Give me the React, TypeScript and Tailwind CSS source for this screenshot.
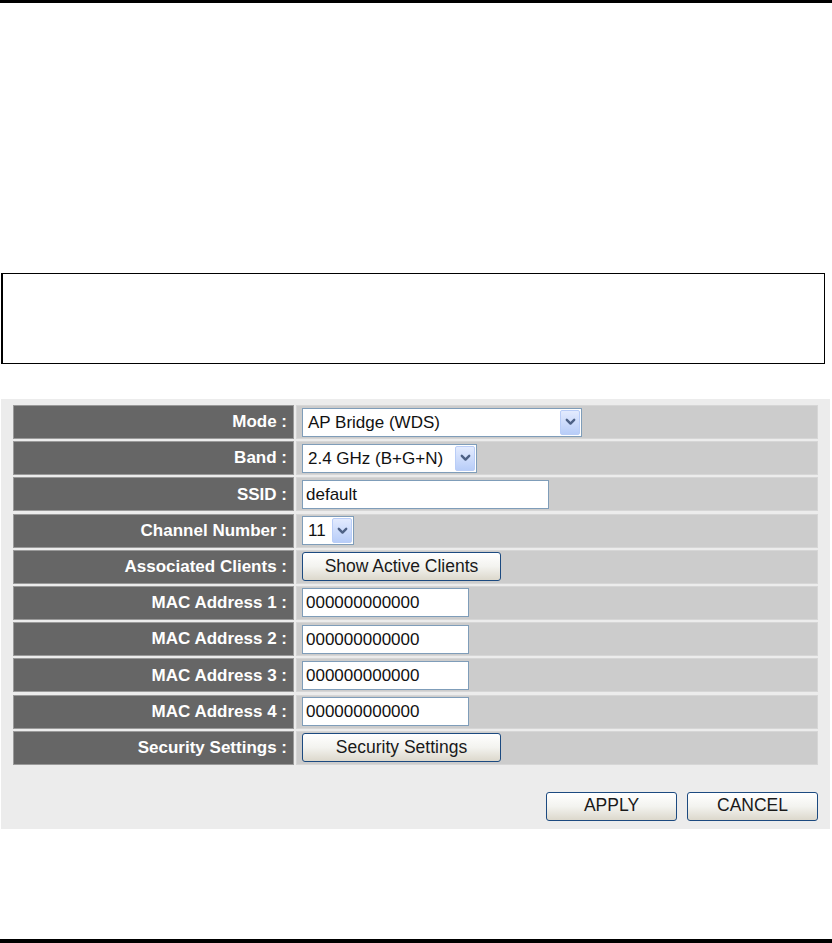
import type { ReactNode } from "react";

const FONT = "font-['Liberation_Sans',Arial,sans-serif]";

function Chevron() {
  return (
    <svg width="11" height="8" viewBox="0 0 11 8" aria-hidden>
      <path d="M1.8 1.8 L5.5 5.6 L9.2 1.8" fill="none" stroke="#4d6185" strokeWidth="2.4" strokeLinecap="round" strokeLinejoin="round" />
    </svg>
  );
}

function Select({ value, width }: { value: string; width: string }) {
  return (
    <div className={`flex h-[29px] items-center border border-[#7f9db9] bg-white ${width}`}>
      <span className="flex-1 truncate pl-[5px] text-[17px] leading-none text-[#111]">{value}</span>
      <span className="mr-[1px] flex h-[25px] w-[20px] items-center justify-center rounded-[2px] border border-[#b9cdf7] bg-gradient-to-b from-[#e3ebfe] to-[#b8cdf8]">
        <Chevron />
      </span>
    </div>
  );
}

function TextBox({ value, width }: { value: string; width: string }) {
  return (
    <div className={`flex h-[29px] items-center border border-[#7f9db9] bg-white pl-[3px] text-[17px] leading-none text-[#111] ${width}`}>
      {value}
    </div>
  );
}

function Button({ children, width }: { children: ReactNode; width: string }) {
  return (
    <button
      type="button"
      className={`flex h-[29px] items-center justify-center rounded-[3px] border border-[#1c4a80] bg-gradient-to-b from-[#ffffff] via-[#f3f3ef] to-[#dcd8cc] text-[17.5px] leading-none text-[#1a1a1a] ${width}`}
    >
      {children}
    </button>
  );
}

const rows: { label: string; control: ReactNode }[] = [
  { label: "Mode :", control: <Select value="AP Bridge (WDS)" width="w-[280px]" /> },
  { label: "Band :", control: <Select value="2.4 GHz (B+G+N)" width="w-[175px]" /> },
  { label: "SSID :", control: <TextBox value="default" width="w-[247px]" /> },
  { label: "Channel Number :", control: <Select value="11" width="w-[52px]" /> },
  { label: "Associated Clients :", control: <Button width="w-[199px]">Show Active Clients</Button> },
  { label: "MAC Address 1 :", control: <TextBox value="000000000000" width="w-[167px]" /> },
  { label: "MAC Address 2 :", control: <TextBox value="000000000000" width="w-[167px]" /> },
  { label: "MAC Address 3 :", control: <TextBox value="000000000000" width="w-[167px]" /> },
  { label: "MAC Address 4 :", control: <TextBox value="000000000000" width="w-[167px]" /> },
  { label: "Security Settings :", control: <Button width="w-[199px]">Security Settings</Button> },
];

export default function App() {
  return (
    <div className={`flex h-[943px] w-[832px] flex-col bg-white ${FONT}`}>
      <div className="h-[3px] w-full bg-black" />

      <div className="ml-[1px] mt-[270px] h-[91px] w-[824px] border border-l-2 border-black" />

      <div className="ml-[1px] mt-[35px] flex h-[430px] w-[829px] flex-col bg-[#ececec] pl-[12px] pt-[6px]">
        <div className="grid grid-cols-[281px_522px] gap-x-[2px] gap-y-[2.2px]">
          {rows.map((row) => (
            <div key={row.label} className="contents">
              <div className="flex h-[34px] items-center justify-end border border-[#9a9a9a] bg-[#666666] pr-[6px] text-[17px] font-bold text-white">
                {row.label}
              </div>
              <div className="flex h-[34px] items-center border border-[#d6d6d6] bg-[#cccccc] pl-[5px]">
                {row.control}
              </div>
            </div>
          ))}
        </div>

        <div className="mt-[27px] flex w-[805px] justify-end gap-[10px]">
          <Button width="w-[131px]">APPLY</Button>
          <Button width="w-[131px]">CANCEL</Button>
        </div>
      </div>

      <div className="mt-auto h-[4px] w-full bg-black" />
    </div>
  );
}
